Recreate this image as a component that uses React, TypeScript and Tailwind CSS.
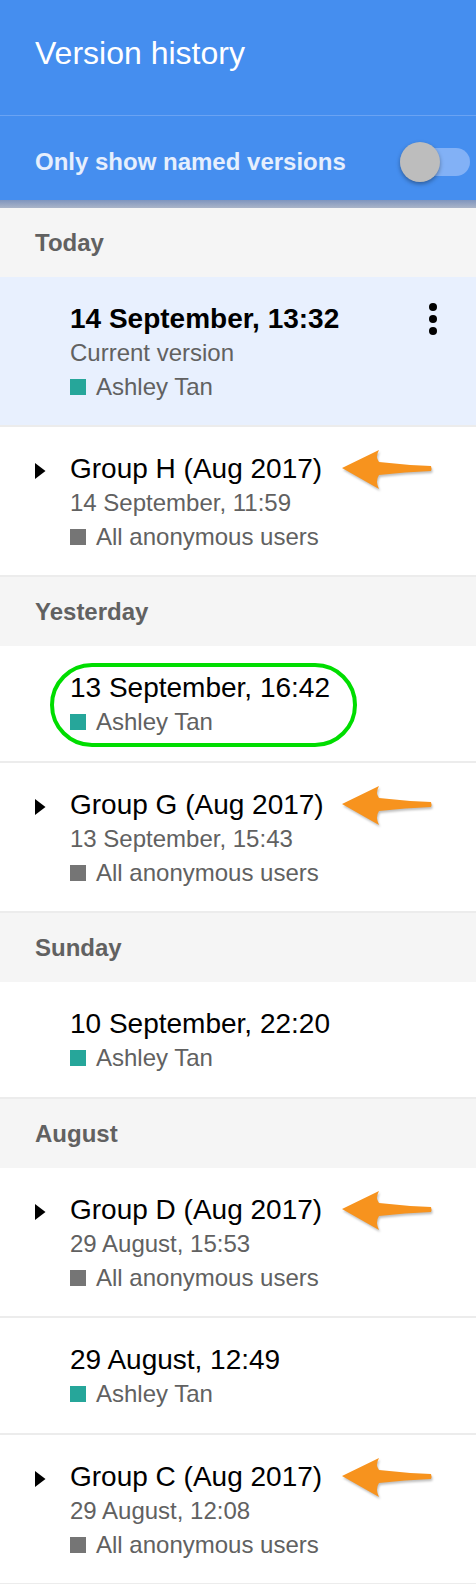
import React from 'react'

type Entry =
  | { kind: 'section'; label: string }
  | {
      kind: 'item'
      title: string
      date?: string
      user: string
      anon?: boolean
      group?: boolean
      current?: boolean
      circled?: boolean
    }

const entries: Entry[] = [
  { kind: 'section', label: 'Today' },
  { kind: 'item', title: '14 September, 13:32', date: 'Current version', user: 'Ashley Tan', current: true },
  { kind: 'item', title: 'Group H (Aug 2017)', date: '14 September, 11:59', user: 'All anonymous users', anon: true, group: true },
  { kind: 'section', label: 'Yesterday' },
  { kind: 'item', title: '13 September, 16:42', user: 'Ashley Tan', circled: true },
  { kind: 'item', title: 'Group G (Aug 2017)', date: '13 September, 15:43', user: 'All anonymous users', anon: true, group: true },
  { kind: 'section', label: 'Sunday' },
  { kind: 'item', title: '10 September, 22:20', user: 'Ashley Tan' },
  { kind: 'section', label: 'August' },
  { kind: 'item', title: 'Group D (Aug 2017)', date: '29 August, 15:53', user: 'All anonymous users', anon: true, group: true },
  { kind: 'item', title: '29 August, 12:49', user: 'Ashley Tan' },
  { kind: 'item', title: 'Group C (Aug 2017)', date: '29 August, 12:08', user: 'All anonymous users', anon: true, group: true },
]

function OrangeArrow() {
  return (
    <svg
      width="92"
      height="42"
      viewBox="0 0 92 42"
      className="absolute left-[341px] top-[22px] drop-shadow-[1px_2px_1px_rgba(0,0,0,0.25)]"
    >
      <path
        d="M1 19 L38 1 Q34 8 38 13 Q64 16 90 17 Q91 19.5 90 22 Q64 23 38 26 Q34 32 38 40 Z"
        fill="#f7931e"
      />
    </svg>
  )
}

function Kebab() {
  return (
    <div className="ml-auto mr-[39px] flex flex-col items-center gap-[4px]">
      <span className="block h-[8px] w-[8px] rounded-full bg-black" />
      <span className="block h-[8px] w-[8px] rounded-full bg-black" />
      <span className="block h-[8px] w-[8px] rounded-full bg-black" />
    </div>
  )
}

function Item({ e }: { e: Extract<Entry, { kind: 'item' }> }) {
  return (
    <div
      className={`relative flex border-b-2 border-[#ececec] pt-[25px] ${e.group || e.current ? 'pb-[21px]' : 'pb-[22px]'} ${
        e.current ? 'bg-[#e8f0fe]' : 'bg-white'
      }`}
    >
      <div className="flex h-[34px] w-[70px] shrink-0 items-center pl-[35px] pt-[4px]">
        {e.group && (
          <svg width="11" height="16" viewBox="0 0 11 16" className="shrink-0">
            <path d="M0 0 L10.5 8 L0 16 Z" fill="#000" />
          </svg>
        )}
      </div>
      <div className="flex flex-1 flex-col">
        <div className="flex h-[34px] items-center">
          <span className={`text-[28px] leading-[34px] text-black ${e.current ? 'font-bold' : ''}`}>{e.title}</span>
          {e.current && <Kebab />}
        </div>
        {e.date && <div className="text-[24px] leading-[34px] text-[#616161]">{e.date}</div>}
        <div className="flex h-[34px] items-center gap-[10px]">
          <span className={`block h-[16px] w-[16px] ${e.anon ? 'bg-[#757575]' : 'bg-[#26a69a]'}`} />
          <span className="text-[24px] leading-[34px] text-[#616161]">{e.user}</span>
        </div>
      </div>
      {e.group && <OrangeArrow />}
      {e.circled && (
        <div className="pointer-events-none absolute left-[50px] top-[17px] h-[84px] w-[307px] rounded-full border-[4px] border-[#00dd00]" />
      )}
    </div>
  )
}

export default function App() {
  return (
    <div className="w-[476px] bg-white font-['Liberation_Sans',Arial,sans-serif]">
      <div className="bg-[#458eef]">
        <div className="h-[116px] border-b border-[#6aa3f3] px-[35px] pt-[34px]">
          <h1 className="text-[32px] leading-[38px] font-normal text-white">Version history</h1>
        </div>
        <div className="flex h-[84px] items-center pl-[35px] pr-[6px] pt-[8px]">
          <span className="text-[24px] font-bold leading-[30px] text-[#e6effd]">Only show named versions</span>
          <div className="relative ml-auto h-[40px] w-[70px]">
            <div className="absolute left-0 right-0 top-[6px] h-[28px] rounded-full bg-[#82b1f6]" />
            <div className="absolute left-0 top-0 h-[40px] w-[40px] rounded-full bg-[#bdbdbd] shadow-[0_2px_4px_rgba(0,0,0,0.35)]" />
          </div>
        </div>
      </div>
      <div className="h-[8px] bg-gradient-to-b from-[#7f95be] to-[#aab4c8]" />
      {entries.map((e, i) =>
        e.kind === 'section' ? (
          <div key={i} className="flex h-[69px] items-center bg-[#f5f5f5] px-[35px]">
            <span className="text-[24px] font-bold text-[#616161]">{e.label}</span>
          </div>
        ) : (
          <Item key={i} e={e} />
        )
      )}
    </div>
  )
}
